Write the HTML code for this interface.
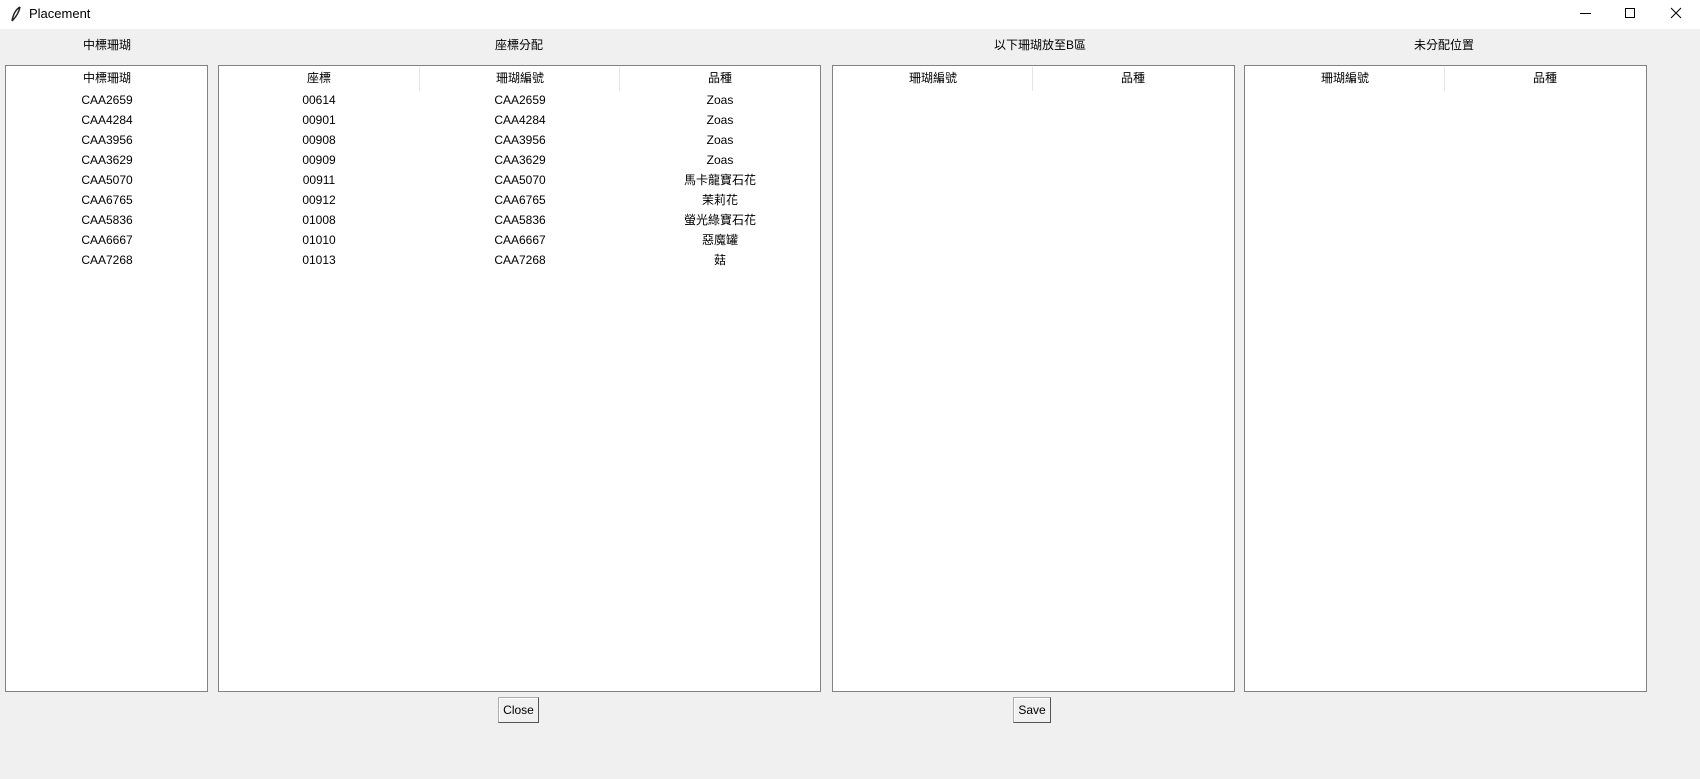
<!DOCTYPE html>
<html><head><meta charset="utf-8"><style>
*{margin:0;padding:0;box-sizing:border-box}
body{width:1700px;height:779px;background:#f0f0f0;font-family:"Liberation Sans","Noto Sans CJK TC",sans-serif;font-size:12px;color:#000;position:relative;overflow:hidden}
.t{position:absolute;left:0;top:0;width:1700px;height:29px;background:#fff}
.abs{position:absolute}
.box{position:absolute;top:65px;height:627px;background:#fff;border:1px solid #828282}
.c{position:absolute;text-align:center;transform:translateX(-50%);white-space:nowrap}
.sep{position:absolute;top:1px;width:1px;height:24px;background:#e5e5e5}
.btn{position:absolute;top:697px;height:26px;background:#f0f0f0;border:1px solid #adadad;border-right-color:#555;border-bottom-color:#555;box-shadow:inset 1px 1px #fff;text-align:center;line-height:24px;font-size:12px}
</style></head><body>
<div class="t">
<svg class="abs" style="left:10px;top:6px" width="12" height="16" viewBox="0 0 12 16"><path d="M10 1 C5 4 3 9 2 15 M10 1 C9 6 6 11 2 15" stroke="#222" stroke-width="1.5" fill="none"/></svg>
<div class="abs" style="left:29px;top:6px;font-size:13px">Placement</div>
<div class="abs" style="left:1580px;top:13px;width:11px;height:1px;background:#000"></div>
<div class="abs" style="left:1625px;top:8px;width:10px;height:10px;border:1px solid #000"></div>
<svg class="abs" style="left:1670px;top:7px" width="12" height="12"><path d="M1 1L11 11M11 1L1 11" stroke="#000" stroke-width="1"/></svg>
</div>
<div class="c" style="left:107px;top:36px">中標珊瑚</div>
<div class="c" style="left:519px;top:36px">座標分配</div>
<div class="c" style="left:1040px;top:36px">以下珊瑚放至B區</div>
<div class="c" style="left:1444px;top:36px">未分配位置</div>

<div class="box" style="left:5px;width:203px">
<div class="c" style="left:101px;top:3px">中標珊瑚</div>
<div class="c" style="left:101px;top:24px;line-height:20px">CAA2659<br>CAA4284<br>CAA3956<br>CAA3629<br>CAA5070<br>CAA6765<br>CAA5836<br>CAA6667<br>CAA7268</div>
</div>

<div class="box" style="left:218px;width:603px">
<div class="sep" style="left:200px"></div><div class="sep" style="left:400px"></div>
<div class="c" style="left:100px;top:3px">座標</div>
<div class="c" style="left:301px;top:3px">珊瑚編號</div>
<div class="c" style="left:501px;top:3px">品種</div>
<div class="c" style="left:100px;top:24px;line-height:20px">00614<br>00901<br>00908<br>00909<br>00911<br>00912<br>01008<br>01010<br>01013</div>
<div class="c" style="left:301px;top:24px;line-height:20px">CAA2659<br>CAA4284<br>CAA3956<br>CAA3629<br>CAA5070<br>CAA6765<br>CAA5836<br>CAA6667<br>CAA7268</div>
<div class="c" style="left:501px;top:24px;line-height:20px">Zoas<br>Zoas<br>Zoas<br>Zoas<br>馬卡龍寶石花<br>茉莉花<br>螢光綠寶石花<br>惡魔罐<br>菇</div>
</div>

<div class="box" style="left:832px;width:403px">
<div class="sep" style="left:199px"></div>
<div class="c" style="left:100px;top:3px">珊瑚編號</div>
<div class="c" style="left:300px;top:3px">品種</div>
</div>
<div class="box" style="left:1244px;width:403px">
<div class="sep" style="left:199px"></div>
<div class="c" style="left:100px;top:3px">珊瑚編號</div>
<div class="c" style="left:300px;top:3px">品種</div>
</div>

<div class="btn" style="left:498px;width:41px">Close</div>
<div class="btn" style="left:1013px;width:38px">Save</div>
</body></html>
